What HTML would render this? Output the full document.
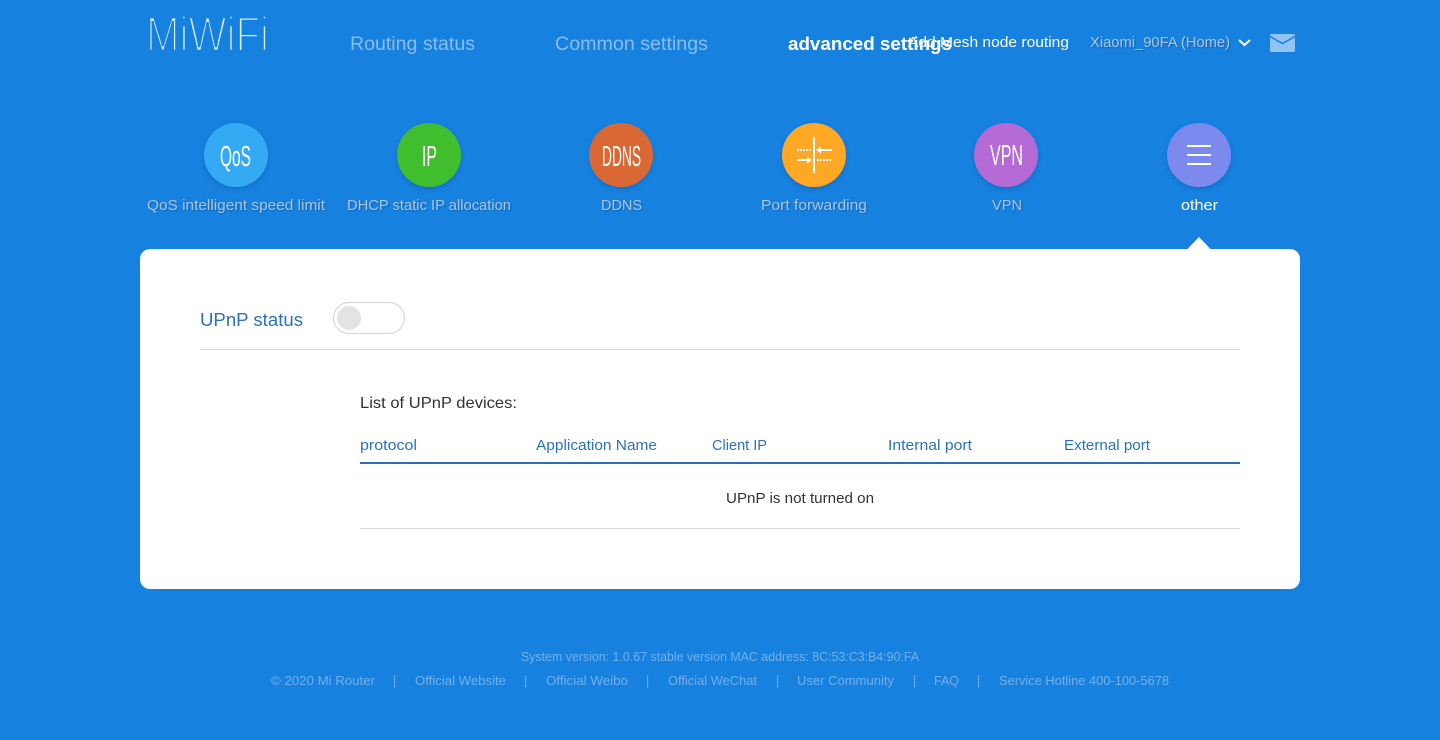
<!DOCTYPE html>
<html lang="en">
<head>
<meta charset="utf-8">
<title>MiWiFi</title>
<style>
html,body{margin:0;padding:0;width:1440px;height:740px;overflow:hidden;background:#1681df}
svg{display:block;position:absolute;left:0;top:0}
text{font-family:"Liberation Sans",sans-serif}
.nav{font-size:19px;fill:#8cbdec}
.lab{font-size:15px;fill:#a9c4e2;text-anchor:start}
.ft{font-size:12.5px;fill:#74b0ee}
.hd{font-size:14.5px;fill:#2b71c0}
.dk{fill:#333}
.ic{fill:#fff;font-size:29px}
</style>
</head>
<body>
<svg width="1440" height="740" viewBox="0 0 1440 740">
<defs>
<filter id="cs" x="-30%" y="-30%" width="160%" height="170%"><feDropShadow dx="0" dy="2" stdDeviation="2.5" flood-color="#0a3f80" flood-opacity=".3"/></filter>
<filter id="ts" x="-5%" y="-30%" width="110%" height="170%"><feDropShadow dx="1" dy="1" stdDeviation=".5" flood-color="#0a3f80" flood-opacity=".45"/></filter>
</defs>
<rect width="1440" height="740" fill="#1681df"/>

<!-- logo -->
<text x="146" y="51" font-size="49" fill="#dcedfc" stroke="#1681df" stroke-width="2.6" textLength="123" lengthAdjust="spacingAndGlyphs">MiWiFi</text>

<!-- nav -->
<text class="nav" x="350" y="50" textLength="125" lengthAdjust="spacingAndGlyphs">Routing status</text>
<text class="nav" x="555" y="50" textLength="153" lengthAdjust="spacingAndGlyphs">Common settings</text>
<text x="788" y="50" font-size="18" font-weight="700" fill="#fff" textLength="164" lengthAdjust="spacingAndGlyphs">advanced settings</text>
<text x="908" y="47" font-size="15" fill="#fff" textLength="161" lengthAdjust="spacingAndGlyphs">Add Mesh node routing</text>
<text x="1090" y="47" font-size="15" fill="#a9c4e2" textLength="140" lengthAdjust="spacingAndGlyphs" filter="url(#ts)">Xiaomi_90FA (Home)</text>
<path d="M1239 40l5.500 5 5.500-5" fill="none" stroke="#fff" stroke-width="2"/>
<rect x="1270" y="34" width="25" height="18" rx="1.500" fill="#8fc4f5"/>
<path d="M1270 36.500l12.500 7 12.500-7" fill="none" stroke="#1681df" stroke-width="1.500"/>

<!-- circles -->
<g filter="url(#cs)">
<circle cx="236" cy="155" r="32" fill="#35aaf4"/>
<circle cx="429" cy="155" r="32" fill="#3fbe2e"/>
<circle cx="621" cy="155" r="32" fill="#d96736"/>
<circle cx="814" cy="155" r="32" fill="#ffa825"/>
<circle cx="1006" cy="155" r="32" fill="#b56bd6"/>
<circle cx="1199" cy="155" r="32" fill="#7b89ef"/>
</g>

<!-- icon text -->
<text class="ic" x="220" y="166" textLength="31" lengthAdjust="spacingAndGlyphs">QoS</text>
<text class="ic" x="422" y="166" textLength="15" lengthAdjust="spacingAndGlyphs">IP</text>
<text class="ic" x="602" y="166" textLength="39" lengthAdjust="spacingAndGlyphs">DDNS</text>
<text class="ic" x="990" y="165" textLength="33" lengthAdjust="spacingAndGlyphs">VPN</text>

<!-- port icon -->
<g fill="#fff">
<rect x="813" y="137" width="2" height="36"/>
<path d="M797 150h14" stroke="#fff" stroke-width="2" stroke-dasharray="2 1" fill="none"/>
<rect x="797" y="159" width="12" height="2"/>
<path d="M807 156.500l5 3.500-5 3.500z"/>
<rect x="820" y="149" width="12" height="2"/>
<path d="M821 146.500l-5 3.500 5 3.500z"/>
<path d="M817 160h15" stroke="#fff" stroke-width="2" stroke-dasharray="2 1" fill="none"/>
</g>

<!-- other icon -->
<g fill="#fff">
<rect x="1187" y="145" width="24" height="2"/>
<rect x="1187" y="154" width="24" height="2"/>
<rect x="1187" y="163" width="24" height="2"/>
</g>

<!-- labels -->
<g filter="url(#ts)">
<text class="lab" x="147" y="210" textLength="178" lengthAdjust="spacingAndGlyphs">QoS intelligent speed limit</text>
<text class="lab" x="347" y="210" textLength="164" lengthAdjust="spacingAndGlyphs">DHCP static IP allocation</text>
<text class="lab" x="601" y="210" textLength="41" lengthAdjust="spacingAndGlyphs">DDNS</text>
<text class="lab" x="761" y="210" textLength="106" lengthAdjust="spacingAndGlyphs">Port forwarding</text>
<text class="lab" x="992" y="210" textLength="30" lengthAdjust="spacingAndGlyphs">VPN</text>
</g>
<text x="1181" y="210" font-size="15" fill="#fff" textLength="37" lengthAdjust="spacingAndGlyphs">other</text>

<!-- panel -->
<rect x="140" y="249" width="1160" height="340" rx="10" fill="#fff"/>
<path d="M1187 249.500l12-12.500 12 12.500z" fill="#fff"/>

<text x="200" y="326" font-size="18" fill="#2b71c0" textLength="103" lengthAdjust="spacingAndGlyphs">UPnP status</text>
<rect x="333.500" y="302.500" width="71" height="31" rx="15.500" fill="#fff" stroke="#d9d9d9" stroke-width="1.200"/>
<circle cx="349" cy="318" r="12" fill="#e3e3e3"/>
<rect x="200" y="349" width="1040" height="1" fill="#d8d8d8"/>

<text class="dk" x="360" y="408" font-size="16" textLength="157" lengthAdjust="spacingAndGlyphs">List of UPnP devices:</text>
<text class="hd" x="360" y="450" textLength="57" lengthAdjust="spacingAndGlyphs">protocol</text>
<text class="hd" x="536" y="450" textLength="121" lengthAdjust="spacingAndGlyphs">Application Name</text>
<text class="hd" x="712" y="450" textLength="55" lengthAdjust="spacingAndGlyphs">Client IP</text>
<text class="hd" x="888" y="450" textLength="84" lengthAdjust="spacingAndGlyphs">Internal port</text>
<text class="hd" x="1064" y="450" textLength="86" lengthAdjust="spacingAndGlyphs">External port</text>
<rect x="360" y="462" width="880" height="2" fill="#2a6fbe"/>
<text class="dk" x="726" y="503" font-size="14.500" textLength="148" lengthAdjust="spacingAndGlyphs">UPnP is not turned on</text>
<rect x="360" y="528" width="880" height="1" fill="#dcdcdc"/>

<!-- footer -->
<text class="ft" x="521" y="661" textLength="398" lengthAdjust="spacingAndGlyphs">System version: 1.0.67 stable version MAC address: 8C:53:C3:B4:90:FA</text>
<text class="ft" x="271" y="685" textLength="104" lengthAdjust="spacingAndGlyphs">© 2020 Mi Router</text>
<text class="ft" x="393" y="685">|</text>
<text class="ft" x="415" y="685" textLength="91" lengthAdjust="spacingAndGlyphs">Official Website</text>
<text class="ft" x="524" y="685">|</text>
<text class="ft" x="546" y="685" textLength="82" lengthAdjust="spacingAndGlyphs">Official Weibo</text>
<text class="ft" x="646" y="685">|</text>
<text class="ft" x="668" y="685" textLength="89" lengthAdjust="spacingAndGlyphs">Official WeChat</text>
<text class="ft" x="776" y="685">|</text>
<text class="ft" x="797" y="685" textLength="97" lengthAdjust="spacingAndGlyphs">User Community</text>
<text class="ft" x="913" y="685">|</text>
<text class="ft" x="934" y="685" textLength="25" lengthAdjust="spacingAndGlyphs">FAQ</text>
<text class="ft" x="977" y="685">|</text>
<text class="ft" x="999" y="685" textLength="170" lengthAdjust="spacingAndGlyphs">Service Hotline 400-100-5678</text>
</svg>
</body>
</html>
